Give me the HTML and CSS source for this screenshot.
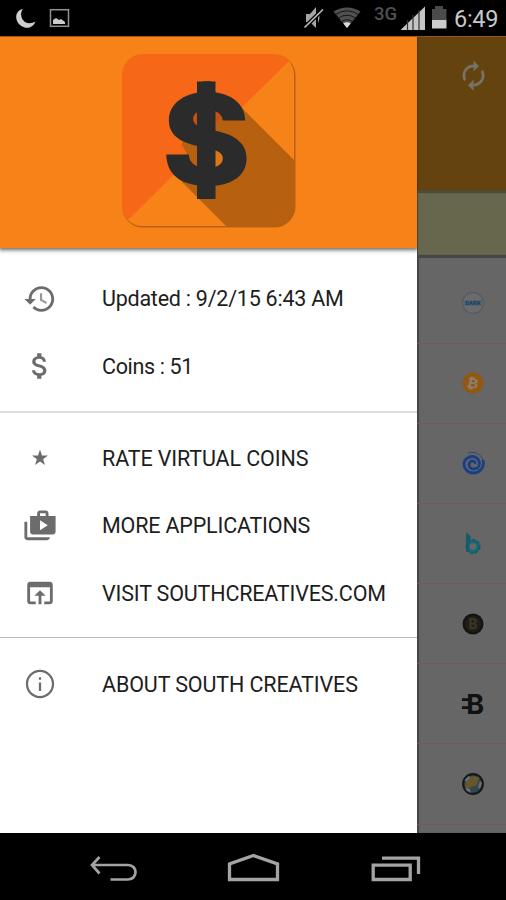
FILE: index.html
```html
<!DOCTYPE html>
<html lang="en">
<head>
<meta charset="utf-8">
<title>Virtual Coins</title>
<link rel="stylesheet" href="styles.css">
</head>
<body>
<div class="phone">
  <header class="status">
    <svg class="status-left" width="80" height="36" viewBox="0 0 80 36">
      <path d="M23 9C15 10 14 20 20 25C26 30 33 28 35.500 21.500C31 24 26 24 23 20C20.500 16.500 20.500 12 23 9Z" fill="#cfcfcf"/>
      <rect x="50.500" y="9.700" width="18" height="16.600" fill="none" stroke="#929292" stroke-width="1.500"/>
      <path d="M53 24v-4l3-2 3 2 2-1 4 3v2z" fill="#ccc"/>
    </svg>
    <svg class="status-right" width="150" height="36" viewBox="300 0 150 36">
      <path d="M306 14h4l6-7v21l-6-6h-4zM318 12q3 5 0 11" fill="#a5a5a5"/>
      <path d="M304.500 27.500L323 9.500" stroke="#000" stroke-width="4"/>
      <path d="M304.500 27.500L323 9.500" stroke="#bbb" stroke-width="1.700"/>
      <path d="M333.500 11.500Q347 3.500 360.500 11.500L347 28Z" fill="#505050"/>
      <path d="M335.500 14.500Q347 7 358.500 14.500M338.500 18Q347 12.500 355.500 18M341.500 21.500Q347 18 352.500 21.500" fill="none" stroke="#161616" stroke-width="1"/>
      <path d="M343.300 23.500Q347 21 350.700 23.500L347 28Z" fill="#ddd"/>
      <text class="network" x="374" y="19.500">3G</text>
      <path d="M400.500 30L425 6.500V30Z" fill="#c4c4c4"/>
      <path d="M407.500 20v10M413 15v15M419 10v20" stroke="#333" stroke-width="1.200"/>
      <path d="M432 9h3V6h8v3h3.500v11H432z" fill="#4b4b4b"/>
      <path d="M432 20h14.500v8.500H432z" fill="#ccc"/>
    </svg>
    <span class="time">6:49</span>
  </header>

  <main class="screen">
    <nav class="drawer">
      <div class="hero">
        <svg width="180" height="180" viewBox="118 50 180 180">
          <defs>
            <clipPath id="tile"><rect x="122" y="54" width="172.500" height="172.500" rx="21"/></clipPath>
          </defs>
          <rect x="122" y="54.500" width="173.500" height="173" rx="21" fill="#b95f13"/>
          <g clip-path="url(#tile)">
            <rect x="121" y="53" width="173" height="173" rx="21" fill="#f68218"/>
            <path d="M121 53H297L121 227Z" fill="#f66818"/>
            <path d="M240 106L294 160V227H227L178 178L197 172L182 145L186 114L225 100Z" fill="#b76110"/>
            <path d="M186 112H226L205 133L190 142Z" fill="#c94f10"/>
            <path d="M214 149h12l5 9-5 9-12 2z" fill="#df7516"/>
          </g>
          <text class="dollar" transform="translate(206.300 185) scale(1.080 1)" text-anchor="middle">$</text>
          <path d="M197 81.500h18.500V199H197z" fill="#2b2b2b"/>
        </svg>
      </div>
      <ul class="group">
        <li class="item"><svg class="icon" viewBox="0 0 24 24"><path d="M13 3c-4.970 0-9 4.030-9 9H1l3.890 3.890.070.140L9 12H6c0-3.870 3.130-7 7-7s7 3.130 7 7-3.130 7-7 7c-1.930 0-3.680-.790-4.940-2.060l-1.420 1.420C8.270 19.990 10.510 21 13 21c4.970 0 9-4.030 9-9s-4.030-9-9-9z"/><path class="soft" d="M12 8v5l4.280 2.540.720-1.210-3.500-2.080V8H12z"/></svg><span class="t-updated">Updated : 9/2/15 6:43 AM</span></li>
        <li class="item"><svg class="icon" viewBox="0 0 24 24"><path d="M11.800 10.900c-2.270-.590-3-1.200-3-2.150 0-1.090 1.010-1.850 2.700-1.850 1.780 0 2.440.850 2.500 2.100h2.210c-.070-1.720-1.120-3.300-3.210-3.810V3h-3v2.160c-1.940.420-3.500 1.680-3.500 3.610 0 2.310 1.910 3.460 4.700 4.130 2.500.600 3 1.480 3 2.410 0 .690-.490 1.790-2.700 1.790-2.060 0-2.870-.920-2.980-2.100h-2.200c.120 2.190 1.760 3.420 3.680 3.830V21h3v-2.150c1.950-.370 3.500-1.500 3.500-3.550 0-2.840-2.430-3.810-4.700-4.400z"/></svg><span class="t-coins">Coins : 51</span></li>
      </ul>
      <ul class="group ruled">
        <li class="item"><svg class="icon" viewBox="0 0 24 24"><path d="M12 6l1.400 4.200h4.200l-3.400 2.600 1.300 4.200-3.500-2.600L8.500 17l1.300-4.200-3.400-2.600h4.200z"/></svg><span class="t-rate">RATE VIRTUAL COINS</span></li>
        <li class="item"><svg class="icon" viewBox="0 0 24 24"><path d="M3 9H1v11c0 1.110.890 2 2 2h14c1.110 0 2-.890 2-2H3V9zm15-4V3c0-1.110-.890-2-2-2h-4c-1.110 0-2 .890-2 2v2H5v11c0 1.110.890 2 2 2h14c1.110 0 2-.890 2-2V5h-5zm-6-2h4v2h-4V3zm0 12V8l5.500 3.500-5.500 3.500z"/></svg><span class="t-more">MORE APPLICATIONS</span></li>
        <li class="item"><svg class="icon" viewBox="0 0 24 24"><path d="M19 4H5c-1.110 0-2 .900-2 2v12c0 1.100.890 2 2 2h4v-2H5V8h14v10h-4v2h4c1.100 0 2-.900 2-2V6c0-1.100-.890-2-2-2zm-7 6l-4 4h3v6h2v-6h3l-4-4z"/></svg><span class="t-visit">VISIT SOUTHCREATIVES.COM</span></li>
      </ul>
      <ul class="group ruled thin">
        <li class="item"><svg class="icon" viewBox="0 0 24 24"><path d="M11.200 17h1.600v-6h-1.600v6zM12 2C6.480 2 2 6.480 2 12s4.480 10 10 10 10-4.480 10-10S17.520 2 12 2zm0 18.400c-4.640 0-8.400-3.760-8.400-8.400s3.760-8.400 8.400-8.400 8.400 3.760 8.400 8.400-3.760 8.400-8.400 8.400zM11.200 9h1.600V7.200h-1.600z"/></svg><span class="t-about">ABOUT SOUTH CREATIVES</span></li>
      </ul>
    </nav>

    <section class="behind">
      <div class="toolbar"><svg width="33" height="33" viewBox="0 0 24 24"><path d="M12 6v3l4-4-4-4v3c-4.420 0-8 3.580-8 8 0 1.570.460 3.030 1.240 4.260L6.700 14.800c-.450-.830-.700-1.790-.700-2.800 0-3.310 2.690-6 6-6zm6.760 1.740L17.300 9.200c.440.840.700 1.790.700 2.800 0 3.310-2.690 6-6 6v-3l-4 4 4 4v-3c4.420 0 8-3.580 8-8 0-1.570-.460-3.030-1.240-4.260z" fill="#777268"/></svg></div>
      <div class="band"></div>
      <div class="coin first"><svg class="logo" viewBox="0 0 24 24"><circle cx="12" cy="12" r="10.500" fill="#6b6b6b" stroke="#565c60" stroke-width="1.300"/><path d="M3.500 9h17v6h-17z" fill="#4f6474"/><text class="dark-word" x="12" y="14.300" text-anchor="middle">DARK</text></svg></div>
      <div class="coin"><svg class="logo" viewBox="0 0 24 24"><circle cx="12" cy="12" r="10.500" fill="#945710"/><text class="btc" x="12" y="17" text-anchor="middle" transform="rotate(12 12 12)">₿</text></svg></div>
      <div class="coin"><svg class="logo" viewBox="0 0 24 24"><path d="M7 2C14 0 20 3 22 9" fill="none" stroke="#33466a" stroke-width="1"/><path d="M22 9C24 17 18 22 12.500 22C7 22 3 18 3 13C3 8.500 7 5.500 11.500 5.500C16 5.500 18.500 9 18.500 12.500C18.500 16 16 18 13 18C10 18 8 16 8 13.500C8 11.500 9.500 10 11.500 10C13.500 10 14.500 11.500 14 13" fill="none" stroke="#183f86" stroke-width="2.800"/></svg></div>
      <div class="coin"><svg class="logo" viewBox="0 0 24 24"><path d="M5 1l4.500 4v5l-4.500 3z" fill="#145c69"/><circle cx="12" cy="15.500" r="5.200" fill="none" stroke="#176572" stroke-width="3.500"/><circle cx="12" cy="15.500" r="6.800" fill="none" stroke="#145c69" stroke-width="1.500" stroke-dasharray="3.500 1.600"/><path d="M5 8h3v13H5z" fill="#145c69"/></svg></div>
      <div class="coin"><svg class="logo" viewBox="0 0 24 24"><circle cx="12" cy="12" r="10.500" fill="#141410"/><circle cx="12" cy="12" r="8" fill="#201e18"/><text class="bullion" x="12" y="17" text-anchor="middle">B</text></svg></div>
      <div class="coin"><svg class="logo" viewBox="0 0 24 24"><text class="bytecoin" x="5.200" y="21.800">B</text><path d="M1 6.300h7v2.800H1zM1 14.300h7v2.800H1z" fill="#111"/></svg></div>
      <div class="coin"><svg class="logo" viewBox="0 0 24 24"><circle cx="12" cy="12" r="9.800" fill="#34464f" stroke="#16181b" stroke-width="2.200"/><path d="M5 9l6-5 7 1-2 8-6 2-4 4-2-5z" fill="#66562b"/><path d="M3.500 8l4-4 2 1-4 5zM4 16l5 1 1 4-4-2zM19 9l2 2-2 6-2-2z" fill="#66717a"/></svg></div>
      <div class="coin rest"></div>
    </section>
  </main>

  <footer class="navbar">
    <svg width="506" height="67" viewBox="0 833 506 67" fill="none" stroke="#a4a4a4">
      <path d="M99.500 857L92 865L99.500 873.500M92 865H128C138 865 138 879.500 128 879.500H110.500" stroke-width="2.700"/>
      <path d="M229.500 879.500V864L253.500 855.500L277.500 864V879.500Z" stroke-width="3.300"/>
      <path d="M373.200 865.200h37v14.300h-37zM382 858.200h36.500V874" stroke-width="3.300"/>
    </svg>
  </footer>
</div>
</body>
</html>
```

FILE: styles.css
```css
* { box-sizing: border-box; }
body { margin: 0; background: #000; font-family: Roboto, "Liberation Sans", sans-serif; }
svg { display: block; flex: none; }
.phone { width: 506px; height: 900px; display: flex; flex-direction: column; overflow: hidden; }

.status { height: 36px; flex: none; display: flex; align-items: center; background: #000; }
.status-right { margin-left: auto; }
.network { font-size: 18.500px; font-weight: 500; fill: #505050; }
.time { width: 56px; padding-left: 4px; font-size: 23.500px; letter-spacing: -.3px; line-height: 36px; color: #c8c8c8; padding-top: 1px; }

.screen { height: 797px; flex: none; display: flex; border-top: 1px solid #9a5418; }
.drawer { width: 417px; flex: none; background: #fff; }
.hero { height: 211px; display: flex; padding: 13px 0 0 118px; background: #f68218; box-shadow: 0 1px 4px 1px rgba(0, 0, 0, .6); clip-path: inset(0 0 -8px 0); }
.group { list-style: none; margin: 0; padding: 17px 0 11px; }
.ruled { border-top: 2px solid #ddd; padding: 11.500px 0 10px; }
.thin { border-top: 1px solid #bbb; padding-top: 12.500px; }
.item { height: 67.500px; display: flex; align-items: center; padding-left: 23px; gap: 45px; font-size: 21.500px; color: #1d1d1d; white-space: nowrap; }
.t-updated { letter-spacing: -.24px; }
.t-coins { letter-spacing: -.36px; }
.t-rate { letter-spacing: -.12px; }
.t-more { letter-spacing: -.18px; }
.t-visit { letter-spacing: -.17px; }
.t-about { letter-spacing: -.12px; }
.icon { width: 34px; height: 34px; fill: #6c6c6c; }
.soft { fill: #999; }
.dollar { font: 800 126px Inter, "Liberation Sans", sans-serif; fill: #2b2b2b; }

.behind { flex: 1; background: #666; box-shadow: inset 2px 0 1px #444; }
.toolbar { height: 153px; padding: 21.500px 0 0 39.500px; background: #64430e; box-shadow: inset 1px 0 1px #4a330c; }
.band { height: 68px; background: #66674d; border-top: 3px solid #504a36; border-bottom: 3px solid #464646; box-shadow: inset 1px 0 1px #444; }
.coin { height: 80.200px; display: flex; align-items: center; padding-left: 44px; border-bottom: 1px solid #755753; }
.first { height: 85.500px; padding-top: 5px; }
.rest { height: 9px; border: 0; }
.logo { width: 24px; height: 24px; overflow: visible; }
.dark-word { font: bold 6px Roboto, sans-serif; fill: #1c3d5c; }
.btc { font: bold 14px "DejaVu Sans", sans-serif; fill: #8c8176; }
.bullion { font: bold 14px Roboto, sans-serif; fill: #3c3824; }
.bytecoin { font: 700 27px Inter, Roboto, sans-serif; fill: #111; }

.navbar { height: 67px; flex: none; background: #000; }
```
